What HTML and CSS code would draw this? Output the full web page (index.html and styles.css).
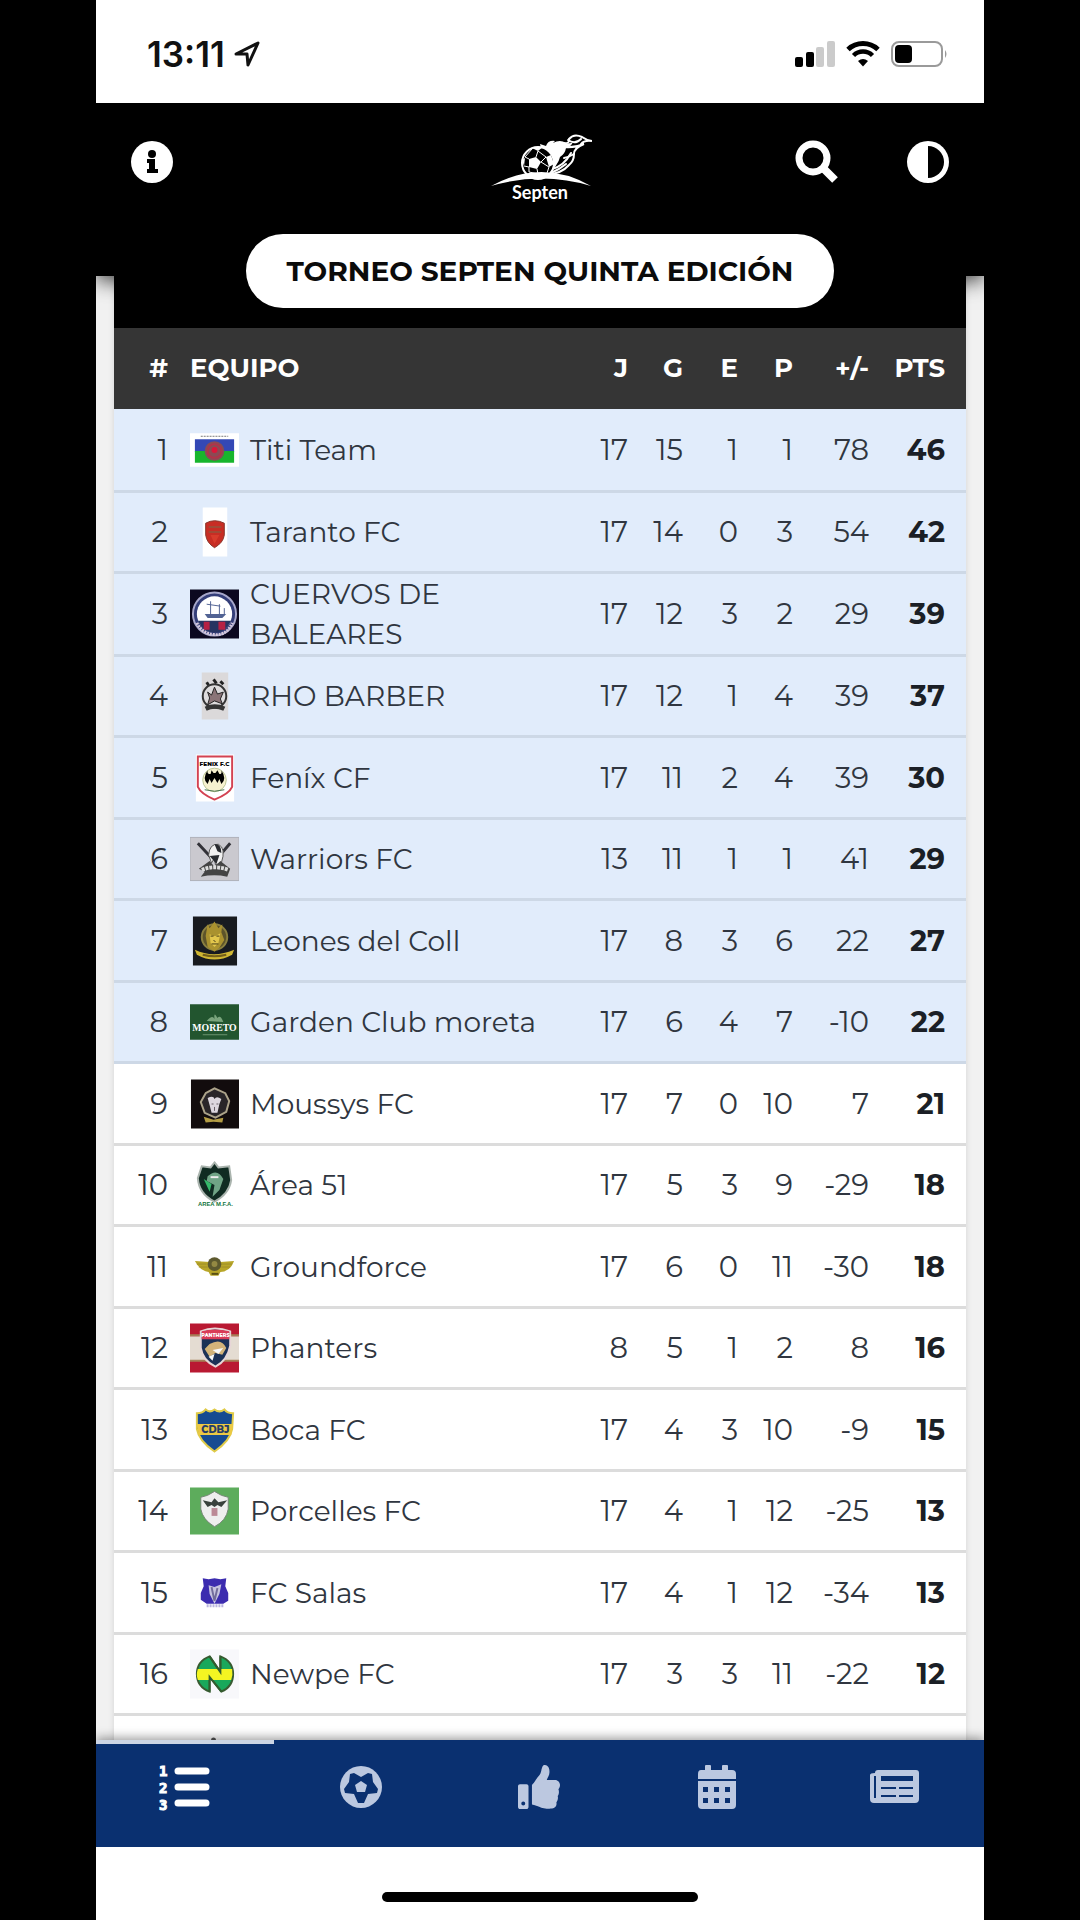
FILE: index.html
```
<!DOCTYPE html>
<html lang="es">
<head>
  <meta charset="UTF-8">
  <title>Torneo Septen Quinta Edición</title>
  <meta name="viewport" content="width=device-width, initial-scale=1.0">
  <link rel="stylesheet" href="styles.css">
</head>
<body>
  <div class="phone">
    <div class="status-bar">
      <div class="status-time">
        <span>13:11</span>
        <svg width="26" height="26" viewBox="0 0 26 26"><path d="M2 13 L24 2 L14 24 L13 13 Z" fill="none" stroke="#111" stroke-width="3" stroke-linejoin="round"/></svg>
      </div>
      <div class="status-icons">
        <svg width="40" height="26" viewBox="0 0 40 26">
          <rect x="0" y="16" width="8" height="10" rx="2"/>
          <rect x="11" y="11" width="8" height="15" rx="2"/>
          <rect x="21" y="6" width="8" height="20" rx="2" fill="#cbcbcb"/>
          <rect x="32" y="0" width="8" height="26" rx="2" fill="#cbcbcb"/>
        </svg>
        <svg width="34" height="26" viewBox="0 0 34 26">
          <path d="M2 8.500 A22 22 0 0 1 32 8.500" fill="none" stroke="#000" stroke-width="5"/>
          <path d="M7.500 14.500 A13.500 13.500 0 0 1 26.500 14.500" fill="none" stroke="#000" stroke-width="4.500"/>
          <path d="M12 20 Q17 16 22 20 L17 25.500 Z"/>
        </svg>
        <svg width="57" height="26" viewBox="0 0 57 26">
          <rect x="1" y="1" width="50" height="24" rx="7" fill="none" stroke="#9a9a9a" stroke-width="2"/>
          <rect x="4" y="4" width="17" height="18" rx="4"/>
          <path d="M54 9 Q57 13 54 17 Z" fill="#999"/>
        </svg>
      </div>
    </div>

    <header class="header">
      <div class="toolbar">
        <button type="button" class="icon-btn" aria-label="Información">
          <svg width="42" height="42" viewBox="0 0 42 42"><circle cx="21" cy="21" r="21" fill="#fff"/><circle cx="21" cy="13" r="4"/><path d="M16 18 H24 V28 H27 V32 H16 V28 H18 V22 H16 Z"/></svg>
        </button>
        <svg class="brand" width="104" height="72" viewBox="0 0 104 72" role="img" aria-label="Septen">
          <g transform="translate(3 2)">
            <path d="M51 17 L49 9 L55 11 Q57 5 64 6 L62 8 Q69 4 75 8 Q80 9 82 7 Q80 12 75 13 Q74 19 69 22 Q67 31 57 38 Q64 28 51 17 Z" fill="#fff"/>
            <g fill="none" stroke="#fff" stroke-width="2" stroke-linecap="round">
              <path d="M72 8 Q79 9 78 4 Q83 -2 91 2 Q95 5 101 6 Q93 5 90 9"/>
              <path d="M77 5 Q84 10 90 4"/>
              <path d="M73 12 Q84 13 93 9 Q83 13 83 19"/>
              <path d="M57 39 Q70 39 78 30 Q83 26 83 19 Q78 22 73 23"/>
              <path d="M61 34 Q73 31 80 18"/>
              <path d="M60 38 Q69 34 75 29"/>
            </g>
            <circle cx="47" cy="28" r="16" fill="#000" stroke="#fff" stroke-width="2"/>
            <path d="M38 24 L45 22 L50 27 L46 34 L38 32 Z M41 13 L52 12 L47 16 Z M55 22 L60 20 L63 29 L58 32 Z M47 39 L56 38 L51 44 L43 43 Z M31 25 L34 23 L33 31 Z" fill="#fff"/>
            <path d="M45 22 L47 16 L55 22 L50 27 L58 32 L56 38 M46 34 L47 39 L38 37 L38 32 L33 31 M38 24 L34 22 L41 14" fill="none" stroke="#fff"/>
            <path d="M0 51 Q51 23 100 51 Q51 36 0 51 Z" fill="#fff"/>
          </g>
          <text x="52" y="66" text-anchor="middle" class="brand-name">Septen</text>
        </svg>
        <div class="toolbar-right">
          <button type="button" class="icon-btn" aria-label="Buscar">
            <svg width="44" height="44" viewBox="0 0 44 44"><circle cx="18" cy="18" r="14" fill="none" stroke="#fff" stroke-width="7"/><path d="M29 29 L40 40" stroke="#fff" stroke-width="8" stroke-linejoin="round"/></svg>
          </button>
          <button type="button" class="icon-btn" aria-label="Cambiar contraste">
            <svg width="42" height="42" viewBox="0 0 42 42"><circle cx="21" cy="21" r="21" fill="#fff"/><path d="M21 5 A16 16 0 0 1 21 37 Z"/></svg>
          </button>
        </div>
      </div>
      <h1 class="title">TORNEO SEPTEN QUINTA EDICIÓN</h1>
    </header>

    <main class="content">
      <div class="card">
        <table class="standings">
          <colgroup>
            <col class="col-pos"><col><col class="col-j"><col class="col-stat"><col class="col-stat"><col class="col-stat"><col class="col-diff"><col class="col-pts">
          </colgroup>
          <thead>
            <tr><th>#</th><th class="team">EQUIPO</th><th>J</th><th>G</th><th>E</th><th>P</th><th>+/-</th><th>PTS</th></tr>
          </thead>
          <tbody>
            <tr class="qualified">
              <td>1</td>
              <td><div class="club"><svg class="crest" viewBox="0 0 50 50"><path fill="#fff" d="M0 8H50V42H0Z"/><path fill="#3448b5" d="M5 14H45V27H5Z"/><path fill="#18b52c" d="M5 26H45V38H5Z"/><circle cx="25" cy="26" r="10" fill="#8b4a54"/><circle cx="25" cy="26" r="7" fill="none" stroke="#b03449" stroke-width="2"/><circle cx="25" cy="25" r="3" fill="#db1739"/><path d="M11 11H39" stroke="#777" stroke-dasharray="2 1"/></svg>Titi Team</div></td>
              <td>17</td><td>15</td><td>1</td><td>1</td><td>78</td><td>46</td>
            </tr>
            <tr class="qualified">
              <td>2</td>
              <td><div class="club"><svg class="crest" viewBox="0 0 50 50"><path fill="#fff" d="M13 0H38V50H13Z"/><path d="M16 16Q25 11 35 16V28Q34 36 25 41Q17 36 16 28Z" fill="#c82d24" stroke="#87352b"/><path d="M19 20H32M19 25H32" stroke="#a04a35" stroke-width="2"/><path d="M21 28H30L25 37Z" fill="#d83c2c"/></svg>Taranto FC</div></td>
              <td>17</td><td>14</td><td>0</td><td>3</td><td>54</td><td>42</td>
            </tr>
            <tr class="qualified">
              <td>3</td>
              <td><div class="club"><svg class="crest" viewBox="0 0 50 50"><path fill="#0b0820" d="M0 0H50V50H0Z"/><circle cx="25" cy="25" r="22" fill="#343e79" stroke="#a8a8cb" stroke-width="2"/><circle cx="25" cy="25" r="18" fill="#fff"/><path d="M8 32H42Q36 44 25 44T8 32Z" fill="#273461"/><path d="M14 33H20V41H14ZM29 33H36V41H29Z" fill="#b62144"/><path d="M15 25H37L33 29H18Z" fill="#526394"/><path d="M21 12V25M17 15L31 17M30 15V25M35 19V25" stroke="#526394"/><path d="M7 34Q12 45 25 46T43 34" fill="none" stroke="#d5c8dc" stroke-width="3" stroke-dasharray="2 1"/></svg>CUERVOS DE BALEARES</div></td>
              <td>17</td><td>12</td><td>3</td><td>2</td><td>29</td><td>39</td>
            </tr>
            <tr class="qualified">
              <td>4</td>
              <td><div class="club"><svg class="crest" viewBox="0 0 50 50"><path fill="#dbd9da" d="M12 1H39V49H12Z"/><path d="M17 11L19 14M24 8L27 12M31 10L34 13" stroke="#222" stroke-width="3"/><circle cx="25" cy="25" r="12" fill="#dedcdd" stroke="#343434" stroke-width="2"/><path d="M18 21L22 24L25 16L28 23L34 21L31 28L33 33L25 30L18 34L20 27Z" fill="#8b7578" stroke="#222"/><path d="M15 36Q25 31 36 36L34 40Q25 36 17 40Z" fill="#353535"/></svg>RHO BARBER</div></td>
              <td>17</td><td>12</td><td>1</td><td>4</td><td>39</td><td>37</td>
            </tr>
            <tr class="qualified">
              <td>5</td>
              <td><div class="club"><svg class="crest" viewBox="0 0 50 50"><path fill="#fff" d="M6 1H45V49H6Z"/><path d="M8 3H43V34Q40 41 25 47Q11 41 8 34Z" fill="#fff" stroke="#d34252" stroke-width="2"/><circle cx="25" cy="27" r="12" fill="#f6f1cf" stroke="#bbc697"/><path d="M18 17Q17 21 21 21L22 17L24 20H26L28 17L30 21Q33 21 32 17Q38 26 32 31L30 26L28 30L25 25L22 30L20 26L18 31Q12 26 18 17Z"/><text x="25" y="13" text-anchor="middle" class="crest-text">FENIX F.C</text><path d="M15 37Q25 40 35 37" fill="none" stroke="#47734c"/></svg>Feníx CF</div></td>
              <td>17</td><td>11</td><td>2</td><td>4</td><td>39</td><td>30</td>
            </tr>
            <tr class="qualified">
              <td>6</td>
              <td><div class="club"><svg class="crest" viewBox="0 0 50 50"><path fill="#cac9cf" stroke="#aeb1b9" d="M0 3H50V47H0Z"/><path d="M8 9L22 24M41 9L29 23" stroke="#323238" stroke-width="3"/><path d="M19 21Q20 9 29 10Q37 14 32 29L26 31L25 24L22 29Z" fill="#f1f1f1" stroke="#555"/><path d="M25 10Q32 9 32 19L28 17ZM20 22L30 21L27 30Z" fill="#292b30"/><path d="M9 35L20 27L25 33L31 27L41 35L38 43Q25 40 11 43L15 38Z" fill="#444"/><path d="M12 36Q25 31 39 36" fill="none" stroke="#ddd" stroke-width="4" stroke-dasharray="3 1"/></svg>Warriors FC</div></td>
              <td>13</td><td>11</td><td>1</td><td>1</td><td>41</td><td>29</td>
            </tr>
            <tr class="qualified">
              <td>7</td>
              <td><div class="club"><svg class="crest" viewBox="0 0 50 50"><path fill="#181b20" d="M3 0H48V50H3Z"/><circle cx="25" cy="21" r="13" fill="#5d542a" stroke="#8b803f" stroke-width="2"/><path d="M18 8L20 12L25 5L29 12L33 8L32 16L35 24L30 32L25 36L18 31L16 20Z" fill="#aa922f"/><path d="M20 18L24 20L26 20L31 17L29 27L25 31L21 27Z" fill="#e2c64c"/><path d="M21 20H24M27 20H30M24 24L26 26M22 28H29" stroke="#443b17"/><path d="M5 34Q24 43 45 34L43 39Q25 49 7 39Z" fill="#d0b733"/><path d="M13 39Q25 42 37 39" fill="none" stroke="#745f19" stroke-width="2"/></svg>Leones del Coll</div></td>
              <td>17</td><td>8</td><td>3</td><td>6</td><td>22</td><td>27</td>
            </tr>
            <tr class="qualified">
              <td>8</td>
              <td><div class="club"><svg class="crest" viewBox="0 0 50 50"><path fill="#22552f" d="M0 7H50V43H0Z"/><path d="M17 24Q23 17 25 22Q24 13 28 21Q31 17 34 25Z" fill="#79a47c"/><text x="25" y="34" text-anchor="middle" class="crest-moreto">MORETO</text><path d="M13 38H38" stroke="#6e9570"/></svg>Garden Club moreta</div></td>
              <td>17</td><td>6</td><td>4</td><td>7</td><td>-10</td><td>22</td>
            </tr>
            <tr>
              <td>9</td>
              <td><div class="club"><svg class="crest" viewBox="0 0 50 50"><path fill="#120c0d" d="M1 0H50V50H1Z"/><path d="M16 14L25 9L36 14L40 22L37 33L26 39L15 34L11 23Z" fill="#292528" stroke="#aca38a" stroke-width="2"/><path d="M18 19Q24 16 25 20Q27 16 32 20L30 25L28 34H22L20 26Z" fill="#ddd7df"/><path d="M22 25H24M27 25H29M25 28V32" stroke="#665d65"/><path d="M14 38L24 41L34 39L33 44L24 43L16 44Z" fill="#b49d45"/></svg>Moussys FC</div></td>
              <td>17</td><td>7</td><td>0</td><td>10</td><td>7</td><td>21</td>
            </tr>
            <tr>
              <td>10</td>
              <td><div class="club"><svg class="crest" viewBox="0 0 50 50"><path d="M25 2L29 7L40 6L42 20Q40 34 25 42Q9 34 8 18L12 6L21 7Z" fill="#102b22" stroke="#aab4ae" stroke-width="2"/><path d="M18 16Q28 7 34 19L30 30L23 37L25 25L17 21Z" fill="#70a486"/><path d="M14 19L22 24L20 32Z" fill="#35b96b"/><path d="M21 17H29" stroke="#eee" stroke-width="2"/><text x="26" y="46" text-anchor="middle" class="crest-area">AREA M.F.A.</text></svg>Área 51</div></td>
              <td>17</td><td>5</td><td>3</td><td>9</td><td>-29</td><td>18</td>
            </tr>
            <tr>
              <td>11</td>
              <td><div class="club"><svg class="crest" viewBox="0 0 50 50"><path d="M5 19L20 20Q25 12 31 20L45 19Q41 30 31 30L29 34H21L19 30Q10 29 5 19Z" fill="#b8a629"/><path d="M7 22H17M9 25H18M32 22H43M32 25H41" stroke="#a08d28"/><circle cx="25" cy="22" r="7" fill="#5d592e"/><circle cx="25" cy="22" r="3" fill="#948943"/><path d="M22 32H29" stroke="#594f15" stroke-width="2"/></svg>Groundforce</div></td>
              <td>17</td><td>6</td><td>0</td><td>11</td><td>-30</td><td>18</td>
            </tr>
            <tr>
              <td>12</td>
              <td><div class="club"><svg class="crest" viewBox="0 0 50 50"><path fill="#b91932" d="M0 0H50V50H0Z"/><path fill="#e4dcd2" d="M0 13H50V38H0Z"/><path d="M0 12H50M0 38H50" stroke="#a57f57" stroke-width="2"/><path d="M11 8Q25 2 41 8V23Q38 38 26 44Q13 38 11 25Z" fill="#1c3157" stroke="#e7d6d7" stroke-width="2"/><path d="M12 8Q25 4 40 8V16H12Z" fill="#d93b57"/><path d="M20 21Q32 14 37 25L33 32L26 30L20 34L15 26Z" fill="#d3b37a"/><path d="M23 27L34 25L29 31ZM19 34L25 31L23 38Z" fill="#f8f8f8"/><text x="26" y="14" text-anchor="middle" class="crest-small">PANTHERS</text></svg>Phanters</div></td>
              <td>8</td><td>5</td><td>1</td><td>2</td><td>8</td><td>16</td>
            </tr>
            <tr>
              <td>13</td>
              <td><div class="club"><svg class="crest" viewBox="0 0 50 50"><path d="M7 8Q13 8 16 4Q20 8 25 4Q30 8 35 4Q38 8 44 8L43 24Q41 36 25 47Q9 36 7 24Z" fill="#164b91" stroke="#e0cb49" stroke-width="2"/><path fill="#ecc943" d="M7 19H44L42 30H9Z"/><text x="26" y="28" text-anchor="middle" class="crest-boca">CDBJ</text></svg>Boca FC</div></td>
              <td>17</td><td>4</td><td>3</td><td>10</td><td>-9</td><td>15</td>
            </tr>
            <tr>
              <td>14</td>
              <td><div class="club"><svg class="crest" viewBox="0 0 50 50"><path fill="#5dac5c" d="M0 1H50V49H0Z"/><path d="M11 11L18 9L25 5L32 9L39 11V23Q37 35 25 41Q13 34 11 23Z" fill="#eee" stroke="#758676"/><path d="M13 14L22 16L25 12L29 16L38 14L32 21L28 19L25 21L22 19L18 21Z" fill="#39413d"/><path fill="#bb8996" d="M22 22H28V30H22Z"/></svg>Porcelles FC</div></td>
              <td>17</td><td>4</td><td>1</td><td>12</td><td>-25</td><td>13</td>
            </tr>
            <tr>
              <td>15</td>
              <td><div class="club"><svg class="crest" viewBox="0 0 50 50"><path d="M13 10L19 11L25 10L31 11L37 10L36 18L39 25V33L34 36H17L11 32V25L14 18Z" fill="#3c2caf"/><path d="M19 17L25 19L32 16L30 26L25 36L20 26Z" fill="#c6c3df"/><path d="M22 19L25 33L28 20" fill="none" stroke="#716b9b" stroke-width="2"/><path d="M17 38H34" stroke="#bab5df" stroke-width="3" stroke-dasharray="2 1"/></svg>FC Salas</div></td>
              <td>17</td><td>4</td><td>1</td><td>12</td><td>-34</td><td>13</td>
            </tr>
            <tr>
              <td>16</td>
              <td><div class="club"><svg class="crest" viewBox="0 0 50 50"><path fill="#f8f8fb" d="M0 0H50V50H0Z"/><path d="M20 7L31 23V7Q44 12 44 25T32 43L20 28V43Q7 38 7 25T20 7Z" fill="#19a85b" stroke="#385b31" stroke-width="2"/><path d="M8 20H28L31 23V20H43Q44 26 42 31H22L20 28V31H8Q6 26 8 20Z" fill="#f4f522"/><path d="M20 7L31 23V7M20 43V28L32 43" fill="none" stroke="#315c2e" stroke-width="2"/></svg>Newpe FC</div></td>
              <td>17</td><td>3</td><td>3</td><td>11</td><td>-22</td><td>12</td>
            </tr>
            <tr>
              <td></td>
              <td><div class="club"><svg class="crest" viewBox="0 0 50 50"><path d="M22 7Q24 5 26 7L27 10L36 16V30Q34 38 24 43Q14 38 12 30V16L21 10Z" fill="#555"/></svg></div></td>
              <td></td><td></td><td></td><td></td><td></td><td></td>
            </tr>
          </tbody>
        </table>
      </div>
    </main>

    <nav class="tabs">
      <a href="#clasificacion" class="tab active" aria-label="Clasificación">
        <svg width="52" height="50" viewBox="0 0 52 50"><g class="list-number"><text x="1" y="14">1</text><text x="1" y="31">2</text><text x="1" y="48">3</text></g><path d="M20 9H48M20 25H48M20 41H48" stroke="currentColor" stroke-width="7" stroke-linecap="round"/></svg>
      </a>
      <a href="#partidos" class="tab" aria-label="Partidos">
        <svg width="42" height="42" viewBox="0 0 42 42"><circle cx="21" cy="21" r="21" fill="currentColor"/><path d="M10 8L14 7L21 11L28 7L32 8L33 16L38 23L37 27L28 28L24 37H18L14 28L5 27L4 23L9 16Z" fill="#0a3070"/><path d="M21 15L27 19L25 26H17L15 19Z" fill="currentColor"/></svg>
      </a>
      <a href="#destacados" class="tab" aria-label="Destacados">
        <svg width="42" height="44" viewBox="0 0 512 512" preserveAspectRatio="none"><path fill="currentColor" d="M104 224H24c-13 0-24 11-24 24v240c0 13 11 24 24 24h80c13 0 24-11 24-24V248c0-13-11-24-24-24zM64 472a24 24 0 1 1 0-48 24 24 0 0 1 0 48zM384 81c0 43-26 67-33 94h101c34 0 60 29 60 59 0 18-7 37-19 48 10 23 8 56-9 79 8 25 0 57-16 74 4 18 2 33-6 44-20 29-69 29-110 29h-3c-47 0-85-17-116-30-15-7-36-16-51-16-7 0-12-5-12-12V236c0-3 1-6 4-9 38-37 54-77 86-109 14-14 20-36 25-57C290 43 299 0 320 0c24 0 64 8 64 81z"/></svg>
      </a>
      <a href="#calendario" class="tab" aria-label="Calendario">
        <svg width="38" height="44" viewBox="0 0 38 44"><path fill="currentColor" fill-rule="evenodd" d="M3 5H7V1Q7 0 8 0H12Q13 0 13 1V5H24V1Q24 0 25 0H29Q30 0 30 1V5H34Q38 5 38 9V14H0V9Q0 5 3 5ZM0 16H38V40Q38 44 34 44H4Q0 44 0 40ZM5 22V27H10V22ZM16 22V27H21V22ZM27 22V27H32V22ZM5 33V38H10V33ZM16 33V38H21V33ZM27 33V38H32V33Z"/></svg>
      </a>
      <a href="#noticias" class="tab" aria-label="Noticias">
        <svg width="49" height="34" viewBox="0 0 49 34"><path fill="currentColor" fill-rule="evenodd" d="M8 0H46Q49 0 49 3V29Q49 33 45 33H4Q0 33 0 29V5Q0 3 5 3Q5 0 8 0ZM4 6V28H6V6ZM11 6V11H43V6ZM11 17V19H26V17ZM29 17V19H43V17ZM11 25V27H26V25ZM29 25V27H43V25Z"/></svg>
      </a>
    </nav>
    <div class="home-area"><div class="home-bar"></div></div>
  </div>
</body>
</html>
```
FILE: styles.css
```
* {
  box-sizing: border-box;
}
body {
  margin: 0;
  background: #000;
  font-family: Montserrat, Inter, sans-serif;
  font-size: 29px;
  line-height: 40px;
  color: #303640;
}
svg {
  display: block;
  flex-shrink: 0;
}
.phone {
  display: flex;
  flex-direction: column;
  max-width: 888px;
  height: 100vh;
  margin: 0 auto;
  background: #fff;
}
.status-bar {
  position: relative;
  z-index: 3;
  display: flex;
  justify-content: space-between;
  align-items: center;
  height: 103px;
  padding: 4px 36px 0 51px;
  flex-shrink: 0;
  background: #fff;
}
.status-time,
.status-icons {
  display: flex;
  align-items: center;
  gap: 9px;
}
.status-time {
  color: #111;
  font-family: Inter, sans-serif;
  font-size: 35px;
  font-weight: 600;
}
.status-icons {
  gap: 11px;
}

/* header */
.header {
  position: relative;
  z-index: 2;
  height: 173px;
  flex-shrink: 0;
  background: #000;
  box-shadow: 0 4px 20px rgba(0,0,0,0.8);
}
.toolbar {
  display: grid;
  grid-template-columns: 1fr auto 1fr;
  align-items: center;
  height: 131px;
  padding: 0 35px;
}
.toolbar-right {
  display: flex;
  justify-content: flex-end;
  align-items: center;
  gap: 68px;
}
.icon-btn {
  justify-self: start;
  padding: 0;
  border: none;
  background: none;
  cursor: pointer;
  margin-bottom: 14px;
}
.brand-name {
  fill: #fff;
  font-family: Lato, sans-serif;
  font-size: 18px;
  font-weight: 700;
}
.title {
  width: fit-content;
  margin: 0 auto;
  padding: 17px 41px;
  border-radius: 37px;
  background: #fff;
  color: #0b0b0b;
  font-size: 28px;
  font-weight: 700;
  white-space: nowrap;
}

/* standings */
.content {
  flex: 1;
  min-height: 0;
  overflow: hidden;
  padding: 0 18px;
  background: #f1f1f1;
}
.card {
  padding-top: 52px;
  background: #000;
  box-shadow: 0 0 6px rgba(0,0,0,0.12);
}
.standings {
  width: 100%;
  table-layout: fixed;
  border-collapse: separate;
  border-spacing: 0;
  background: #fff;
}
.col-pos {
  width: 65px;
}
.col-j {
  width: 70px;
}
.col-stat {
  width: 55px;
}
.col-diff {
  width: 76px;
}
.col-pts {
  width: 86px;
}
.standings th,
.standings td {
  padding: 0 11px;
  text-align: right;
}
.standings th {
  height: 81px;
  padding-bottom: 2px;
  background: #353535;
  color: #fff;
  font-size: 26px;
  font-weight: 700;
}
.standings th.team,
.standings td:nth-child(2) {
  text-align: left;
}
.standings td {
  height: 82px;
  border-bottom: 3px solid #dcdcdc;
}
.standings tr:nth-child(even) td {
  height: 81px;
}
.standings tbody tr:first-child td {
  height: 84px;
}
.standings .qualified td {
  background: #e1ecfb;
  border-bottom-color: #cdd8e6;
}
.standings th:last-child,
.standings td:last-child {
  padding-right: 21px;
}
.standings td:last-child {
  color: #1b1f26;
  font-weight: 700;
}
.club {
  display: flex;
  align-items: center;
  gap: 11px;
  font-size: 28px;
}
.crest {
  width: 49px;
  height: 50px;
}
.crest-text,
.crest-small {
  font-size: 6px;
  font-weight: 800;
}
.crest-small {
  fill: #fff;
  font-size: 5px;
}
.crest-moreto {
  fill: #fff;
  font-family: "Liberation Serif", serif;
  font-size: 10px;
  font-weight: 700;
}
.crest-area {
  fill: #12763e;
  font-family: "Liberation Sans", sans-serif;
  font-size: 6px;
  font-weight: 700;
}
.crest-boca {
  fill: #263d68;
  font-size: 10px;
  font-weight: 800;
}

/* bottom navigation */
.tabs {
  position: relative;
  z-index: 2;
  display: flex;
  height: 107px;
  flex-shrink: 0;
  background: #0a3070;
  box-shadow: 0 -2px 10px rgba(0,0,0,0.4);
}
.tab {
  display: flex;
  flex: 1;
  justify-content: center;
  align-items: center;
  padding: 0 2px 18px 0;
  border-top: 4px solid transparent;
  color: #bcc8e0;
}
.tab.active {
  border-top-color: #ccd5e5;
  color: #fff;
}
.list-number {
  fill: currentColor;
  stroke: currentColor;
  font-family: "DejaVu Sans Mono", monospace;
  font-size: 14px;
  font-weight: 700;
}
.home-area {
  position: relative;
  z-index: 3;
  height: 73px;
  padding-top: 45px;
  flex-shrink: 0;
  background: #fff;
}
.home-bar {
  width: 316px;
  height: 10px;
  margin: 0 auto;
  border-radius: 5px;
  background: #000;
}
```
